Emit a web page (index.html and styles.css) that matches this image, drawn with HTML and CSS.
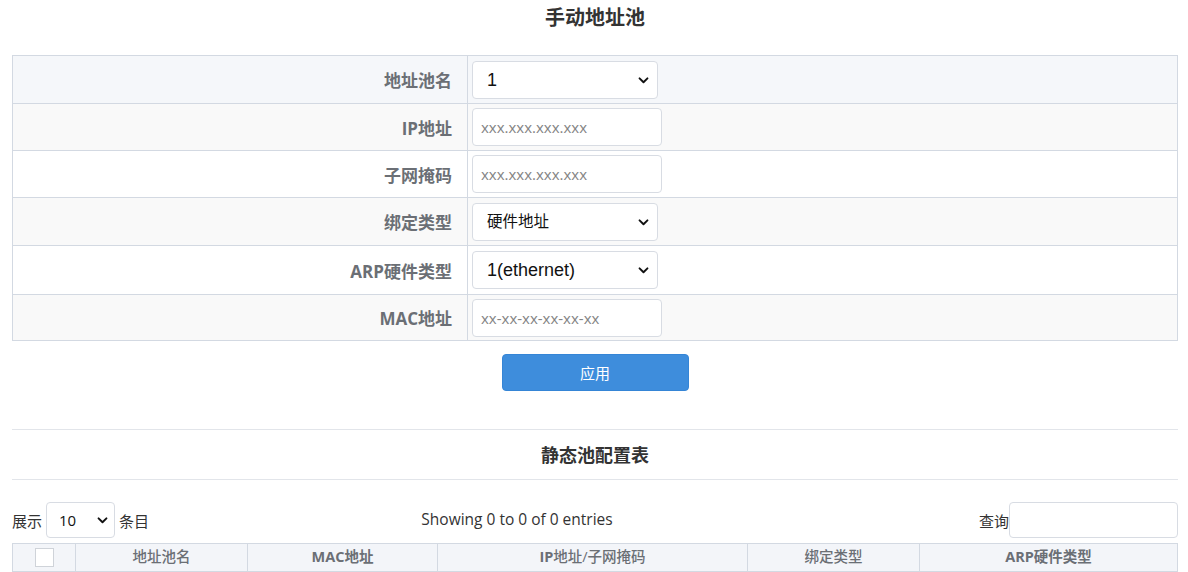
FILE: index.html
```html
<!DOCTYPE html>
<html lang="zh-CN">
<head>
<meta charset="utf-8">
<title>手动地址池</title>
<link rel="stylesheet" href="styles.css">
</head>
<body>
<div class="page">
  <h2 class="title">手动地址池</h2>
  <table class="form">
    <tr class="row-hl r48">
      <th>地址池名</th>
      <td><span class="sel sel-186"><select><option>1</option></select><svg class="chev" viewBox="0 0 12 8"><path d="M1.5 1.5 6 6 10.5 1.5" fill="none" stroke="#111" stroke-width="2.2" stroke-linecap="round" stroke-linejoin="round"/></svg></span></td>
    </tr>
    <tr class="row-grey">
      <th>IP地址</th>
      <td><input class="txt" type="text" placeholder="xxx.xxx.xxx.xxx"></td>
    </tr>
    <tr>
      <th>子网掩码</th>
      <td><input class="txt" type="text" placeholder="xxx.xxx.xxx.xxx"></td>
    </tr>
    <tr class="row-grey r48">
      <th>绑定类型</th>
      <td><span class="sel sel-186"><select class="cjk"><option>硬件地址</option></select><svg class="chev" viewBox="0 0 12 8"><path d="M1.5 1.5 6 6 10.5 1.5" fill="none" stroke="#111" stroke-width="2.2" stroke-linecap="round" stroke-linejoin="round"/></svg></span></td>
    </tr>
    <tr class="r49">
      <th>ARP硬件类型</th>
      <td><span class="sel sel-186"><select><option>1(ethernet)</option></select><svg class="chev" viewBox="0 0 12 8"><path d="M1.5 1.5 6 6 10.5 1.5" fill="none" stroke="#111" stroke-width="2.2" stroke-linecap="round" stroke-linejoin="round"/></svg></span></td>
    </tr>
    <tr class="row-grey r46">
      <th>MAC地址</th>
      <td><input class="txt" type="text" placeholder="xx-xx-xx-xx-xx-xx"></td>
    </tr>
  </table>
  <div class="actions"><button class="btn" type="button">应用</button></div>

  <div class="section">
    <h3 class="subtitle">静态池配置表</h3>
  </div>

  <div class="controls">
    <div class="len">展示 <span class="sel sel-len"><select><option>10</option></select><svg class="chev" viewBox="0 0 12 8"><path d="M1.5 1.5 6 6 10.5 1.5" fill="none" stroke="#111" stroke-width="2.2" stroke-linecap="round" stroke-linejoin="round"/></svg></span> 条目</div>
    <div class="info">Showing 0 to 0 of 0 entries</div>
    <div class="search">查询<input class="search-box" type="text"></div>
  </div>

  <table class="grid">
    <colgroup>
      <col style="width:63px"><col style="width:172px"><col style="width:190px"><col style="width:310px"><col style="width:172px"><col>
    </colgroup>
    <thead>
      <tr>
        <th><span class="cb"></span></th>
        <th>地址池名</th>
        <th><b>MAC地址</b></th>
        <th><b>IP</b>地址/子网掩码</th>
        <th>绑定类型</th>
        <th><b>ARP硬件类型</b></th>
      </tr>
    </thead>
  </table>
</div>
</body>
</html>
```

FILE: styles.css
```css
* { box-sizing: border-box; }
html, body { margin: 0; padding: 0; background: #fff; }
body {
  font-family: "Open Sans", "Noto Sans CJK SC", sans-serif;
  color: #333;
  font-size: 15px;
}
.page { padding: 0 10px 0 12px; }

.title {
  margin: 0;
  height: 55px;
  padding-top: 4px;
  text-align: center;
  font-size: 20px;
  font-weight: bold;
  line-height: 28px;
  color: #333;
}

.form {
  width: 100%;
  border-collapse: collapse;
  border: 1px solid #d3d9e2;
}
.form tr { height: 47px; background: #fff; }
.form tr.r48 { height: 48px; }
.form tr.r49 { height: 49px; }
.form tr.r46 { height: 46px; }
.form tr.row-grey { background: #f9f9f9; }
.form tr.row-hl { background: #f5f7fa; }
.form th, .form td { border: 1px solid #d3d9e2; padding: 0 4px; }
.form th {
  width: 455px;
  text-align: right;
  padding-right: 15px;
  font-size: 17px;
  font-weight: bold;
  color: #6b6f75;
}

.sel { position: relative; display: inline-block; vertical-align: middle; }
.sel select {
  appearance: none;
  -webkit-appearance: none;
  width: 100%;
  height: 38px;
  border: 1px solid #d8dce3;
  border-radius: 4px;
  background: #fff;
  padding: 0 26px 0 14px;
  font-family: "Liberation Sans", "Noto Sans CJK SC", sans-serif;
  font-size: 18px;
  color: #111;
  outline: none;
}
.sel select.cjk { font-size: 15.5px; }
.sel-186 { width: 186px; }
.chev {
  position: absolute;
  right: 9px;
  top: 16px;
  width: 11px;
  height: 7px;
  pointer-events: none;
}
.txt {
  display: block;
  width: 190px;
  height: 38px;
  border: 1px solid #d8dce3;
  border-radius: 4px;
  background: #fff;
  padding: 0 8px;
  font-family: "Open Sans", sans-serif;
  font-size: 15px;
  outline: none;
}
.txt::placeholder { color: #848484; }

.actions {
  display: flex;
  justify-content: center;
  padding-top: 13px;
  height: 88px;
}
.btn {
  width: 187px;
  height: 37px;
  border: 1px solid #3585d6;
  border-radius: 4px;
  background: #3e8ddc;
  color: #fff;
  font-family: "Noto Sans CJK SC", sans-serif;
  font-size: 15px;
  cursor: pointer;
}

.section {
  border-top: 1px solid #e2e5ea;
  border-bottom: 1px solid #e2e5ea;
  height: 51px;
}
.subtitle {
  margin: 0;
  text-align: center;
  font-size: 18px;
  font-weight: bold;
  line-height: 51px;
  color: #333;
}

.controls {
  display: flex;
  align-items: center;
  justify-content: space-between;
  margin-top: 22px;
  height: 36px;
  font-size: 15px;
  color: #333;
}
.len { display: flex; align-items: center; gap: 4px; }
.sel-len { width: 69px; }
.sel-len select {
  height: 36px;
  padding-left: 12px;
  font-family: "Open Sans", sans-serif;
  font-size: 15px;
}
.sel-len .chev { top: 15px; right: 7px; }
.info { padding-right: 94px; padding-bottom: 3px; font-size: 15.5px; }
.search { display: flex; align-items: center; }
.search-box {
  width: 169px;
  height: 36px;
  border: 1px solid #d8dce3;
  border-radius: 4px;
  outline: none;
}

.grid {
  margin-top: 5px;
  width: 100%;
  table-layout: fixed;
  border-collapse: collapse;
  border: 1px solid #d3d9e2;
}
.grid th {
  height: 28px;
  border: 1px solid #d3d9e2;
  background: #f3f5f9;
  font-size: 14.5px;
  font-weight: 500;
  line-height: 20px;
  color: #6b6f75;
  text-align: center;
  padding: 0 0 2px;
}
.grid th b { font-weight: bold; }
.cb {
  display: inline-block;
  width: 19px;
  height: 19px;
  background: #fff;
  border: 1px solid #cfd3d9;
  vertical-align: middle;
}
```
